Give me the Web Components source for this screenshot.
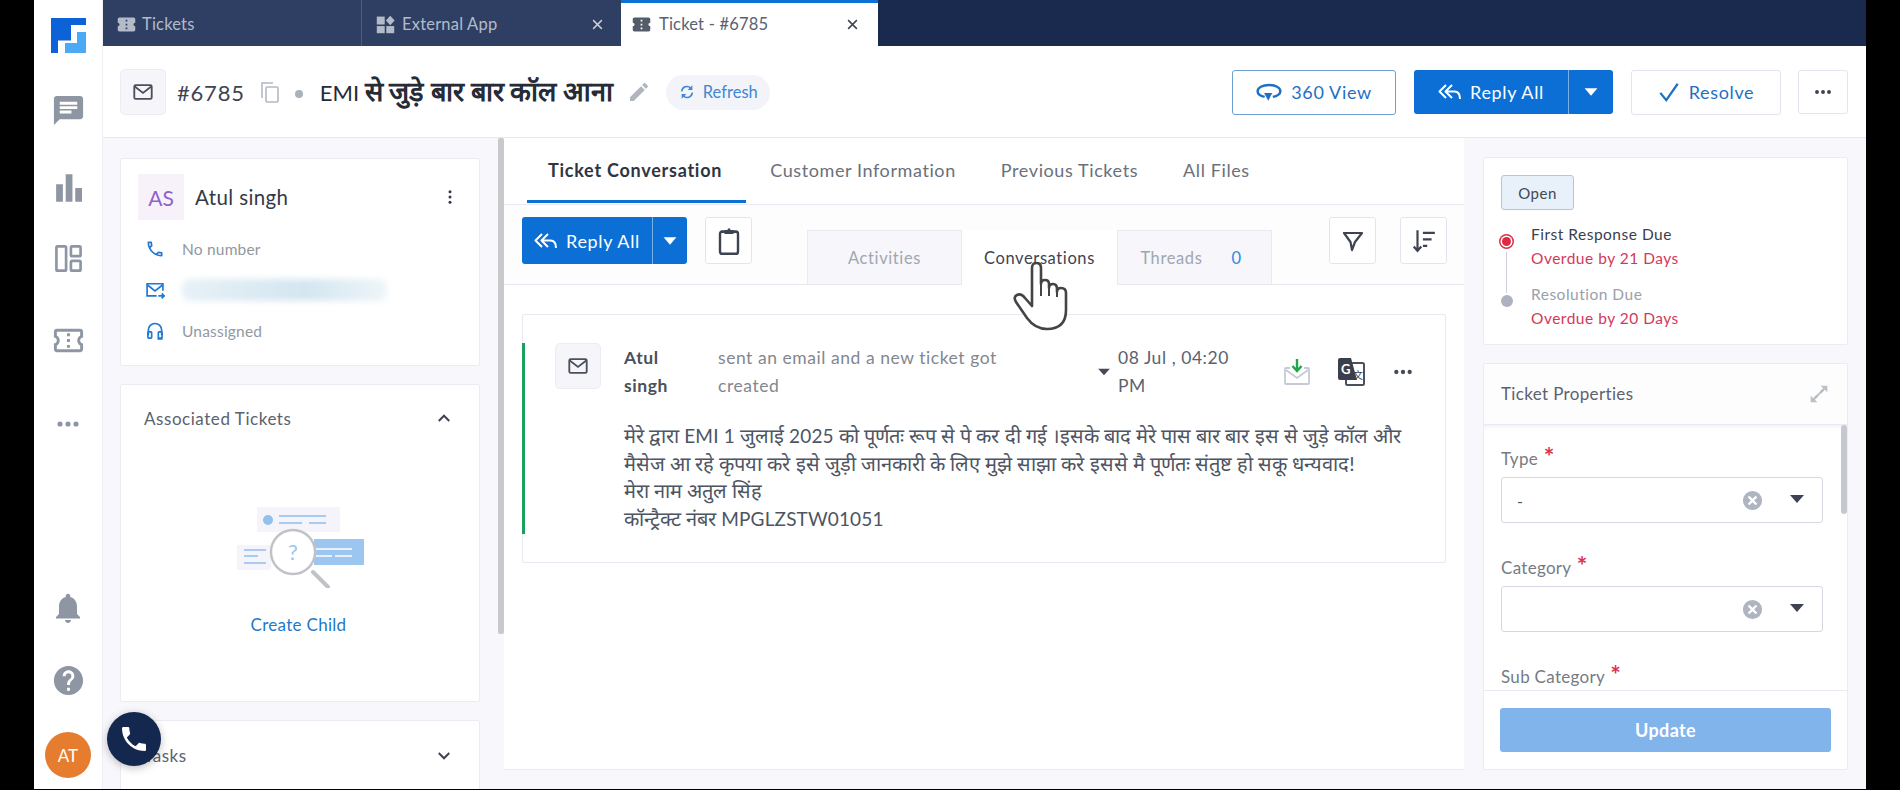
<!DOCTYPE html>
<html lang="hi"><head><meta charset="utf-8"><title>Ticket</title>
<style>
html,body{margin:0;padding:0;background:#000;width:1900px;height:790px;overflow:hidden}
body{font-family:Lato,"Noto Sans",sans-serif;color:#333a47}
</style></head><body>
<x-app>
  <x-sidebar slot="side"></x-sidebar>
  <x-tabbar slot="tabs"></x-tabbar>
  <x-ticket-header slot="head"></x-ticket-header>
  <x-left-col slot="left"></x-left-col>
  <x-conv-panel slot="center"></x-conv-panel>
  <x-right-col slot="right"></x-right-col>
</x-app>
<script>
const ICONS={
 ticketFill:'<path fill="currentColor" d="M22 10V6c0-1.11-.9-2-2-2H4c-1.1 0-1.99.89-1.99 2v4c1.1 0 1.99.9 1.99 2s-.89 2-2 2v4c0 1.1.9 2 2 2h16c1.1 0 2-.9 2-2v-4c-1.1 0-2-.9-2-2s.9-2 2-2zm-9 7.5h-2v-2h2v2zm0-4.5h-2v-2h2v2zm0-4.5h-2v-2h2v2z"/>',
 ticket:'<path fill="currentColor" d="M22 10V6c0-1.11-.9-2-2-2H4c-1.1 0-1.99.89-1.99 2v4c1.1 0 1.99.9 1.99 2s-.89 2-2 2v4c0 1.1.9 2 2 2h16c1.1 0 2-.9 2-2v-4c-1.1 0-2-.9-2-2s.9-2 2-2zm-2-1.46c-1.19.69-2 1.99-2 3.46s.81 2.77 2 3.46V18H4v-2.54c1.19-.69 2-1.99 2-3.46 0-1.48-.8-2.77-1.99-3.46L4 6h16v2.54zM11 15h2v2h-2zm0-4h2v2h-2zm0-4h2v2h-2z"/>',
 apps:'<g fill="currentColor"><rect x="1" y="2" width="10" height="10"/><rect x="1" y="14" width="10" height="9"/><rect x="13" y="14" width="10" height="9"/><path d="M18 1l5.500 6-5.500 6-5.500-6z"/></g>',
 chat:'<path fill="currentColor" d="M20 2H4c-1.1 0-2 .9-2 2v18l4-4h14c1.1 0 2-.9 2-2V4c0-1.1-.9-2-2-2zM6 9h12v2H6V9zm8 5H6v-2h8v2zm4-6H6V6h12v2z"/>',
 chart:'<g fill="currentColor"><rect x="1" y="9" width="6" height="14"/><rect x="9.500" y="1" width="6" height="22"/><rect x="18" y="12" width="6" height="11"/></g>',
 layout:'<g fill="none" stroke="currentColor" stroke-width="2.200"><rect x="2" y="2" width="8" height="20" rx="1"/><rect x="14" y="2" width="8" height="8" rx="1"/><rect x="14" y="14" width="8" height="8" rx="1"/></g>',
 dots:'<g fill="currentColor"><circle cx="4" cy="12" r="2.600"/><circle cx="12" cy="12" r="2.600"/><circle cx="20" cy="12" r="2.600"/></g>',
 vdots:'<g fill="currentColor"><circle cx="12" cy="5" r="2"/><circle cx="12" cy="12" r="2"/><circle cx="12" cy="19" r="2"/></g>',
 bell:'<path fill="currentColor" d="M12 22c1.1 0 2-.9 2-2h-4c0 1.1.9 2 2 2zm6-6v-5c0-3.07-1.63-5.64-4.5-6.32V4c0-.83-.67-1.5-1.5-1.5s-1.5.67-1.5 1.5v.68C7.64 5.36 6 7.92 6 11v5l-2 2v1h16v-1l-2-2z"/>',
 help:'<path fill="currentColor" d="M12 2C6.48 2 2 6.48 2 12s4.48 10 10 10 10-4.48 10-10S17.52 2 12 2zm1 17h-2v-2h2v2zm2.07-7.75l-.9.92C13.45 12.9 13 13.5 13 15h-2v-.5c0-1.1.45-2.1 1.17-2.83l1.24-1.26c.37-.36.59-.86.59-1.41 0-1.1-.9-2-2-2s-2 .9-2 2H8c0-2.21 1.79-4 4-4s4 1.79 4 4c0 .88-.36 1.68-.93 2.25z"/>',
 phone:'<path fill="currentColor" d="M6.62 10.79c1.44 2.83 3.76 5.14 6.59 6.59l2.2-2.2c.27-.27.67-.36 1.02-.24 1.12.37 2.33.57 3.57.57.55 0 1 .45 1 1V20c0 .55-.45 1-1 1-9.39 0-17-7.61-17-17 0-.55.45-1 1-1h3.5c.55 0 1 .45 1 1 0 1.25.2 2.45.57 3.57.11.35.03.74-.25 1.02l-2.2 2.2z"/>',
 phoneLine:'<path fill="currentColor" d="M6.54 5c.06.89.21 1.76.45 2.59l-1.2 1.2c-.41-1.2-.67-2.47-.76-3.79h1.51m9.86 12.02c.85.24 1.72.39 2.6.45v1.49c-1.32-.09-2.59-.35-3.8-.75l1.2-1.19M7.5 3H4c-.55 0-1 .45-1 1 0 9.39 7.61 17 17 17 .55 0 1-.45 1-1v-3.49c0-.55-.45-1-1-1-1.24 0-2.45-.2-3.57-.57-.1-.04-.21-.05-.31-.05-.26 0-.51.1-.71.29l-2.2 2.2c-2.83-1.45-5.15-3.76-6.59-6.59l2.2-2.2c.28-.28.36-.67.25-1.02C8.7 6.45 8.5 5.25 8.5 4c0-.55-.45-1-1-1z"/>',
 mail:'<g fill="none" stroke="currentColor" stroke-width="2"><rect x="2.500" y="4.500" width="19" height="15" rx="1.500"/><path d="M3 6l9 7 9-7"/></g>',
 mailSend:'<g fill="none" stroke="currentColor" stroke-width="2"><path d="M14 19H2.500V4.500h19V13"/><path d="M3 6l9 7 9-7"/><path d="M16 19h7M20 16l3 3-3 3"/></g>',
 headset:'<g fill="none" stroke="currentColor" stroke-width="2"><path d="M4 17V11a8 8 0 0116 0v6"/><rect x="3.500" y="13" width="4.500" height="7.500" rx="1"/><rect x="16" y="13" width="4.500" height="7.500" rx="1"/><path d="M20 20v1.500h-5"/></g>',
 copy:'<g fill="none" stroke="currentColor" stroke-width="1.600"><path d="M4 18V3h11"/><rect x="8" y="7" width="12" height="15" rx="1"/></g>',
 pen:'<path fill="currentColor" d="M3 17.25V21h3.75L17.81 9.94l-3.75-3.75L3 17.25zM20.71 7.04a1 1 0 000-1.41l-2.34-2.34a1 1 0 00-1.41 0l-1.83 1.83 3.75 3.75 1.83-1.83z"/>',
 refresh:'<g fill="none" stroke="currentColor" stroke-width="2.400"><path d="M4 11a8 8 0 0113.500-5"/><path d="M20 13a8 8 0 01-13.500 5"/></g><path fill="currentColor" d="M20 2v7h-7zM4 22v-7h7z"/>',
 view360:'<g fill="none" stroke="currentColor" stroke-width="2.300"><path d="M8 16.500C4 15.700 1.500 13.800 1.500 11.300 1.500 8 6 5.500 12 5.500s10.500 2.500 10.500 5.800c0 2.500-3 4.600-7 5.200"/></g><path fill="currentColor" d="M7.500 13h7.500l-3.700 7z"/>',
 replyAll:'<g fill="none" stroke="currentColor" stroke-width="2" stroke-linejoin="round"><path d="M8 5l-6.500 6.500L8 18"/><path d="M14 5l-6.500 6.500L14 18"/><path d="M8 11.500h8.500c3.500 0 5.500 2.500 5.500 7.500"/></g>',
 caret:'<path fill="currentColor" d="M5 8h14l-7 8z"/>',
 check:'<path fill="none" stroke="currentColor" stroke-width="2.400" d="M2.500 13l6.500 8L21.500 3"/>',
 up:'<path fill="none" stroke="currentColor" stroke-width="2.600" d="M5 16l7-7 7 7"/>',
 down:'<path fill="none" stroke="currentColor" stroke-width="2.600" d="M5 8l7 7 7-7"/>',
 clipboard:'<rect x="3" y="4" width="18" height="19" rx="2" fill="none" stroke="currentColor" stroke-width="2.400" stroke-linejoin="round"/><path fill="currentColor" d="M7.500 2.500h3a1.500 1.500 0 013 0h3v3.500h-9z"/>',
 filter:'<path fill="none" stroke="currentColor" stroke-width="2.200" stroke-linejoin="round" d="M3 4h18l-7 9-3 8-1.500-8z"/>',
 sort:'<g fill="none" stroke="currentColor" stroke-width="2"><path d="M6 2v18M2.500 17L6 21l3.500-4"/><path d="M11 4.500h11M11 10.500h8M11 16.500h4"/></g>',
 expand:'<path fill="currentColor" d="M14 2h8v8l-3-3-4 4-2-2 4-4zM10 22H2v-8l3 3 4-4 2 2-4 4z" opacity=".9"/><path stroke="currentColor" stroke-width="2" d="M17 7L7 17"/>',
 clear:'<path fill="currentColor" fill-rule="evenodd" d="M12 2a10 10 0 100 20 10 10 0 000-20zM8.700 7l3.300 3.300L15.300 7 17 8.700 13.700 12l3.300 3.300-1.700 1.700-3.300-3.300L8.700 17 7 15.300l3.300-3.300L7 8.700z"/>',
 close:'<path fill="none" stroke="currentColor" stroke-width="2.400" d="M5 5l14 14M19 5L5 19"/>'
};
function def(name,css,html,extra){
  const tpl=document.createElement('template');
  tpl.innerHTML='<style>'+css+'</style>'+html;
  customElements.define(name,class extends HTMLElement{
    constructor(){super();this.attachShadow({mode:'open'}).appendChild(tpl.content.cloneNode(true));if(extra)extra.call(this)}
  });
}
customElements.define('x-icon',class extends HTMLElement{
  constructor(){super();this.attachShadow({mode:'open'})}
  connectedCallback(){
    const s=this.getAttribute('size')||24, w=this.getAttribute('w')||s, h=this.getAttribute('h')||s;
    this.shadowRoot.innerHTML='<style>:host{display:inline-flex;flex:none;color:'+(this.getAttribute('color')||'inherit')+'}svg{display:block}</style><svg width="'+w+'" height="'+h+'" viewBox="0 0 24 24" preserveAspectRatio="none">'+ICONS[this.getAttribute('name')]+'</svg>';
  }
});
def('x-app',`
:host{display:grid;grid-template-columns:69px 1fr;grid-template-rows:46px 92px 1fr;margin-left:34px;width:1832px;height:789px;background:#f7f7fc;position:relative;overflow:hidden}
::slotted([slot=side]){grid-row:1/4}
.body{display:grid;grid-template-columns:401px 960px 1fr;min-height:0}
`,`<slot name="side"></slot><slot name="tabs"></slot><slot name="head"></slot>
<div class="body"><slot name="left"></slot><slot name="center"></slot><slot name="right"></slot></div>`);

def('x-sidebar',`
:host{display:flex;flex-direction:column;align-items:center;background:#fff;border-right:1px solid #eeeef5;color:#8e96a3;height:789px;box-sizing:border-box;position:relative}
.logo{margin-top:18px}
.i{height:30px;display:flex;align-items:center;justify-content:center}
.bottom{margin-top:auto;display:flex;flex-direction:column;align-items:center;padding-bottom:11px}
.av{width:46px;height:46px;border-radius:50%;background:#e57c2e;color:#fff;display:flex;align-items:center;justify-content:center;font:17px Lato,sans-serif;margin-top:34px}
`,`
<svg class="logo" width="35" height="35" viewBox="0 0 35 35"><path fill="#0c62d6" d="M0 0h35v7H20v15.500H7V35H0z"/><path fill="#4aaaf5" d="M26 14h9v21H14V25h12z"/></svg>
<div class="i" style="margin-top:42px"><x-icon name="chat" size="35"></x-icon></div>
<div class="i" style="margin-top:48px"><x-icon name="chart" w="27" h="30"></x-icon></div>
<div class="i" style="margin-top:40px"><x-icon name="layout" size="29"></x-icon></div>
<div class="i" style="margin-top:52px"><x-icon name="ticket" size="35"></x-icon></div>
<div class="i" style="margin-top:54px"><x-icon name="dots" size="24"></x-icon></div>
<div class="bottom">
<x-icon name="bell" size="36"></x-icon>
<x-icon name="help" size="35" style="margin-top:37px"></x-icon>
<div class="av">AT</div>
</div>`);

def('x-tab-item',`
:host{display:flex;align-items:center;width:259px;box-sizing:border-box;height:46px;font:16.500px Lato,sans-serif;letter-spacing:.2px;color:#b4bbc8;padding:2px 14px 0;border-right:1px solid #4d5a78;position:relative}
:host([active]){background:#fff;color:#5a6170;border-right:0;border-top:3px solid #0b6fd6;width:257px;padding:0 10px 1px 10px}
.t{margin-left:7px;flex:1}
`,`<slot name="icon"></slot><span class="t"><slot></slot></span><slot name="x"></slot>`);
def('x-tabbar',`
:host{display:flex;background:#1a2a4f;height:46px}
.old{display:flex;background:#2e3f63}
x-tab-item:first-child{padding-left:13px}
`,`<div class="old">
<x-tab-item><x-icon slot="icon" name="ticketFill" size="21" style="margin-right:-2px"></x-icon>Tickets</x-tab-item>
<x-tab-item style="border-right:0"><x-icon slot="icon" name="apps" size="19"></x-icon>External App<x-icon slot="x" name="close" size="15" color="#c6ccd6" style="margin-right:2px"></x-icon></x-tab-item>
</div>
<x-tab-item active><x-icon slot="icon" name="ticketFill" size="21" color="#555c69"></x-icon>Ticket - #6785<x-icon slot="x" name="close" size="15" color="#3d4350" style="margin-right:8px"></x-icon></x-tab-item>`);

def('x-btn',`
:host{display:inline-flex;align-items:center;justify-content:center;box-sizing:border-box;height:45px;border:1px solid #e3e5ee;border-radius:3px;background:#fff;font:18px Lato,sans-serif;letter-spacing:.65px;color:#1f6fc4;gap:9px}
:host([outline]){border-color:#6f9fd0;border-width:1.5px}
`,`<slot></slot>`);
def('x-split',`
:host{display:inline-flex;height:var(--h,44px);background:#0b6fd6;border-radius:3px;color:#fff;font:18px Lato,sans-serif;letter-spacing:.65px}
.a{display:flex;align-items:center;justify-content:center;gap:8px;width:var(--a,154px);border-right:1px solid #7ab0e8;box-sizing:content-box}
.b{display:flex;align-items:center;justify-content:center;flex:1;min-width:var(--b,44px)}
`,`<div class="a"><x-icon name="replyAll" size="24"></x-icon><slot></slot></div><div class="b"><x-icon name="caret" size="22"></x-icon></div>`);
def('x-tile',`
:host{display:flex;align-items:center;justify-content:center;width:46px;height:46px;box-sizing:border-box;background:#f5f5fa;border:1px solid #ecedf4;border-radius:5px;color:#4a505c;flex:none}
`,`<x-icon name="mail" size="22"></x-icon>`);
def('x-ticket-header',`
:host{display:flex;align-items:center;background:#fff;border-bottom:1px solid #e6e7ee;box-sizing:border-box;height:92px;padding:1px 18px 0 17px;font-family:Lato,sans-serif}
.id{font-size:22px;letter-spacing:.8px;color:#3d4451;margin-left:11px}
.dot{width:8px;height:8px;border-radius:50%;background:#aab0bc;margin:4px 17px 0 13px}
.title{font-size:22px;color:#252b37;white-space:nowrap;width:296px;line-height:30px}
.title span{font-size:27.100px;font-weight:700;line-height:30px}
.ref{display:flex;align-items:center;gap:8px;height:35px;width:104px;box-sizing:border-box;border-radius:18px;background:#f3f3fa;color:#3f87d2;font-size:16.500px;padding-left:13px;margin-left:15px}
.sp{flex:1}
x-split{margin:0 18px}
`,`<x-tile></x-tile><span class="id">#6785</span>
<x-icon name="copy" size="24" color="#b3b8c2" style="margin-left:13px"></x-icon>
<i class="dot"></i><div class="title">EMI <span>से जुड़े बार बार कॉल आना</span></div>
<x-icon name="pen" size="24" color="#b0b5be" style="margin-left:11px"></x-icon>
<div class="ref"><x-icon name="refresh" size="16"></x-icon>Refresh</div><span class="sp"></span>
<x-btn outline style="width:164px"><x-icon name="view360" size="26"></x-icon>360 View</x-btn>
<x-split style="--a:154px;--b:44px;--h:44px">Reply All</x-split>
<x-btn style="width:150px;color:#1f6fc4"><x-icon name="check" size="22"></x-icon>Resolve</x-btn>
<x-btn style="width:50px;margin-left:17px;color:#3d4350;height:44px"><x-icon name="dots" size="18"></x-icon></x-btn>`);

def('x-card',`
:host{display:block;background:#fff;border:1px solid #ebecf3;border-radius:2px;box-sizing:border-box;flex:none}
`,`<slot></slot>`);
def('x-left-col',`
:host{display:flex;flex-direction:column;gap:18px;padding:20px 24px 0 17px;background:#f7f7fc;position:relative;overflow:hidden;min-height:0;box-sizing:border-box;height:651px;font-family:Lato,sans-serif}
.sb{position:absolute;right:0;top:0;width:6px;height:496px;background:#c9c9cb;border-radius:2px}
.contact{height:208px;padding:15px 20px 15px 17px}
.who{display:flex;align-items:center}
.av{width:46px;height:46px;background:#f7f2f9;color:#8e62d0;display:flex;align-items:center;justify-content:center;font-size:21px}
.nm{font-size:20.500px;letter-spacing:.4px;color:#333a47;margin-left:11px;flex:1}
.row{display:flex;align-items:center;height:41px;color:#9298a2;font-size:15.500px;letter-spacing:.2px}
.row x-icon{margin:0 17px 0 7px;color:#1f78d1}
.who+.row{margin-top:8px}
.blur{width:205px;height:22px;background:linear-gradient(90deg,#e7f1f7,#d4e6f0 60%,#eef5f9);border-radius:8px;filter:blur(3px)}
.assoc{height:318px;display:flex;flex-direction:column;align-items:center;padding:0 23px}
.ch{display:flex;align-items:center;justify-content:space-between;align-self:stretch;height:66px;font-size:17px;letter-spacing:.55px;color:#5b626f}
.ch x-icon{color:#3d4350;margin-right:3px}
.ill{margin-top:56px}
.cc{margin-top:26px;color:#1f78c8;font-size:17px;letter-spacing:.3px;margin-left:-3px}
.tasks{height:100px;padding:0 23px}
.tasks .ch{height:69px}
`,`
<x-card class="contact">
 <div class="who"><div class="av">AS</div><div class="nm">Atul singh</div><x-icon name="vdots" size="18" color="#333a47"></x-icon></div>
 <div class="row"><x-icon name="phoneLine" size="20"></x-icon>No number</div>
 <div class="row"><x-icon name="mailSend" size="20"></x-icon><div class="blur"></div></div>
 <div class="row"><x-icon name="headset" size="20"></x-icon>Unassigned</div>
</x-card>
<x-card class="assoc">
 <div class="ch">Associated Tickets<x-icon name="up" size="18"></x-icon></div>
 <svg class="ill" width="127" height="81" viewBox="0 0 127 81">
  <rect x="20" width="83" height="25" fill="#f5f4fa"/><circle cx="31" cy="13" r="5" fill="#92c1ee"/>
  <g stroke="#8fbfee" stroke-width="1.500"><path d="M42 9h47M42 16h23M72 16h17"/></g>
  <rect y="38" width="34" height="25" fill="#f5f4fa"/>
  <g stroke="#8fbfee" stroke-width="1.500"><path d="M7 43h22M7 49h14M7 56h22"/></g>
  <rect x="77" y="32" width="50" height="26" fill="#9cc6f0"/>
  <g stroke="#fff" stroke-width="1.500"><path d="M79 42h36M79 49h16M98 49h17"/></g>
  <circle cx="56" cy="45" r="22" fill="#fff" stroke="#c0c2c8" stroke-width="2.400"/>
  <text x="56" y="53" text-anchor="middle" font-size="22" font-family="Lato,sans-serif" fill="#9cc6f0">?</text>
  <path d="M76 65l15 15" stroke="#c0c2c8" stroke-width="4" stroke-linecap="round"/>
 </svg>
 <div class="cc">Create Child</div>
</x-card>
<x-card class="tasks"><div class="ch">Tasks<x-icon name="down" size="18"></x-icon></div></x-card>
<div class="sb"></div>`);

def('x-main-tab',`
:host{display:flex;align-items:center;padding:2px 21px 0;height:60px;font:18px Lato,sans-serif;letter-spacing:.6px;color:#6a707c;border-bottom:3px solid transparent;box-sizing:content-box}
:host([active]){font-weight:700;color:#2f3542;border-bottom-color:#0b6fd6;letter-spacing:.75px;padding:2px 24px 0 21px}
`,`<slot></slot>`);
def('x-sub-tab',`
:host{display:flex;align-items:center;justify-content:center;width:155px;height:55px;box-sizing:border-box;background:#f6f6fb;border:1px solid #e8e9f1;color:#a0a6b0;font:16.500px Lato,sans-serif;letter-spacing:.6px;gap:29px}
:host([active]){background:#fff;color:#3d4451;border-bottom-color:#fff;border-top:0;border-left:0;border-right:0;height:56px;position:relative}
`,`<slot></slot>`);
def('x-square',`
:host{display:flex;align-items:center;justify-content:center;width:47px;height:47px;box-sizing:border-box;background:#fff;border:1px solid #e3e5ee;border-radius:3px;color:#3d4350;flex:none}
`,`<slot></slot>`);
def('x-conv-panel',`
:host{display:block;margin-bottom:19px;background:#fff;border:solid #ebecf3;border-width:0 0 1px 0;position:relative;height:632px;box-sizing:border-box;font-family:Lato,sans-serif}
.tabs{display:flex;height:67px;box-sizing:border-box;padding-left:23px;gap:3px;border-bottom:1px solid #e8e9f1}
.bar{display:flex;align-items:flex-start;height:80px;box-sizing:border-box;padding:12px 17px 0 18px;background:#fdfdfe;border-bottom:1px solid #e8e9f1}
x-split{--a:130px;--b:34px;--h:47px}
.subs{display:flex;margin:13px 0 0 55px}
.sp{flex:1}
.card{margin:29px 18px 0;height:249px;box-sizing:border-box;background:#fff;border:1px solid #e8e9f1;border-radius:2px;padding-top:28px}
.inner{border-left:3px solid #19a05a;height:191px;margin-left:-1px;padding-left:30px;box-sizing:border-box;display:flex;align-items:flex-start;color:#5b626f}
.col{margin-left:23px;flex:1;font-size:17.500px;line-height:28px;letter-spacing:.55px;min-width:0;padding-top:1px}
.top{display:flex;align-items:flex-start}
.nm{font-weight:700;width:94px;padding-right:30px;box-sizing:border-box;color:#4a505c}
.ds{width:380px;padding-right:70px;box-sizing:border-box;color:#82878f;flex:none}
.dt{width:135px;color:#5b626f;margin-left:7px;flex:none}
.acts{display:flex;align-items:center;margin-left:30px;margin-top:14px}
.msg{margin-top:22px;font-size:20px;line-height:27.500px;white-space:nowrap;color:#4d5462;letter-spacing:0}
.msg span{font-size:19px;letter-spacing:.15px}
`,`
<div class="tabs"><x-main-tab active>Ticket Conversation</x-main-tab><x-main-tab>Customer Information</x-main-tab><x-main-tab>Previous Tickets</x-main-tab><x-main-tab>All Files</x-main-tab></div>
<div class="bar">
 <x-split>Reply All</x-split>
 <x-square style="margin-left:18px"><x-icon name="clipboard" w="24" h="28"></x-icon></x-square>
 <div class="subs"><x-sub-tab>Activities</x-sub-tab><x-sub-tab active>Conversations</x-sub-tab><x-sub-tab style="padding-right:7px">Threads<span style="color:#2d8ae0">0</span></x-sub-tab></div>
 <span class="sp"></span>
 <x-square><x-icon name="filter" size="24"></x-icon></x-square>
 <x-square style="margin-left:24px"><x-icon name="sort" size="26"></x-icon></x-square>
</div>
<div class="card"><div class="inner">
 <x-tile></x-tile>
 <div class="col">
  <div class="top">
   <div class="nm">Atul singh</div>
   <div class="ds">sent an email and a new ticket got created</div>
   <x-icon name="caret" size="20" color="#444a56" style="margin-top:18px;margin-left:-4px;margin-right:-3px"></x-icon>
   <div class="dt">08 Jul , 04:20 PM</div>
   <div class="acts">
    <svg width="28" height="28" viewBox="0 0 28 28"><path fill="none" stroke="#c5cad6" stroke-width="1.800" d="M7 10H3a1 1 0 00-1 1v14a1 1 0 001 1h22a1 1 0 001-1V11a1 1 0 00-1-1h-4"/><path fill="none" stroke="#c5cad6" stroke-width="1.800" d="M3 12l11 8 11-8"/><path fill="none" stroke="#1fa64a" stroke-width="2.400" d="M14 1v11M9.500 8l4.500 5 4.500-5"/></svg>
    <svg width="28" height="28" viewBox="0 0 28 28" style="margin-left:26px"><rect x="9" y="5" width="18" height="22" rx="1.500" fill="#fff" stroke="#4a505c" stroke-width="2"/><path fill="#3a3f4b" d="M1 2a2 2 0 012-2h11l6 22H3a2 2 0 01-2-2z"/><text x="4" y="16" font-size="13" font-weight="700" font-family="Lato,sans-serif" fill="#fff">G</text><text x="16" y="21" font-size="10" font-family="'Noto Sans CJK SC',sans-serif" fill="#3a3f4b">文</text></svg>
    <x-icon name="dots" size="20" color="#444a56" style="margin-left:28px"></x-icon>
   </div>
  </div>
  <div class="msg">मेरे द्वारा <span>EMI 1</span> जुलाई <span>2025</span> को पूर्णतः रूप से पे कर दी गई ।इसके बाद मेरे पास बार बार इस से जुड़े कॉल और<br>मैसेज आ रहे कृपया करे इसे जुड़ी जानकारी के लिए मुझे साझा करे इससे मै पूर्णतः संतुष्ट हो सकू धन्यवाद!<br>मेरा नाम अतुल सिंह<br>कॉन्ट्रैक्ट नंबर <span>MPGLZSTW01051</span></div>
 </div>
</div></div>
<svg style="position:absolute;left:509px;top:124px" width="56" height="69" viewBox="0 0 56 69"><path fill="#fff" stroke="#444" stroke-width="2.600" stroke-linejoin="round" d="M19 35V6q0-5 4.500-5T28 6v16q0-4 4-4t4 4v4q0-4 4-4t4 5v3q0-4 4-4 5 0 5 5v17q0 19-19 19-12 0-20-11L3 40q-3-5 1-7t8 3l7 8z"/><path fill="none" stroke="#444" stroke-width="2" d="M28 22v12M36 26v8M44 30v5"/></svg>`);

def('x-field',`
:host{display:block;font-family:Lato,sans-serif;flex:none}
.l{height:20px;line-height:20px;font-size:17px;letter-spacing:.3px;color:#757b86}
.l i{color:#d9344f;font-style:normal;margin-left:1px;font-size:25px;line-height:20px;position:relative;top:1px;font-weight:700}
.s{display:flex;align-items:center;box-sizing:border-box;height:46px;margin-top:12px;border:1px solid #d5d8e2;border-radius:3px;background:#fff;padding-left:15px;font-size:16px;color:#4d5462}
.v{flex:1}
`,`<div class="l"><slot name="label"></slot> <i>*</i></div><div class="s"><span class="v"><slot></slot></span><x-icon name="clear" size="23" color="#aeb4c0"></x-icon><x-icon name="caret" size="24" color="#3d4350" style="margin:-2px 13px 0 21px"></x-icon></div>`);
def('x-right-col',`
:host{display:flex;flex-direction:column;gap:18px;padding:19px 18px 19px 19px;background:#f7f7fc;box-sizing:border-box;height:651px;font-family:Lato,sans-serif}
.sla{height:188px;padding:17px 17px 0;font-size:15.500px;letter-spacing:.5px}
.open{display:inline-flex;align-items:center;justify-content:center;width:73px;height:35px;box-sizing:border-box;background:#e8f0f9;border:1px solid #a9c9e8;border-radius:3px;color:#424956;font-size:15px}
.tl{margin-top:12px;display:grid;grid-template-columns:30px 1fr;grid-template-rows:repeat(2,60px)}
.m{position:relative}
.n{line-height:24px;color:#3a404c}
.o{line-height:24px;color:#d4375a}
.mute{color:#9aa0aa}
.r{width:9px;height:9px;border-radius:50%;background:#dc2c45;position:absolute;left:1px;top:15px;box-shadow:0 0 0 1.500px #fff,0 0 0 3px #dc2c45}
.g{width:12px;height:12px;border-radius:50%;background:#aeb2bf;position:absolute;left:0;top:13px}
.ln{position:absolute;left:5px;top:30px;height:41px;width:1px;background:#cdd0d8}
.props{height:407px;display:flex;flex-direction:column}
.ph{display:flex;align-items:center;justify-content:space-between;height:61px;box-sizing:border-box;padding:0 18px 1px 17px;border-bottom:1px solid #e8e9f1;font-size:17px;letter-spacing:.35px;color:#5b626f;background:#fdfdfe}
.pb{flex:1;min-height:0;overflow:hidden;position:relative;padding:20px 24px 0 17px;display:flex;flex-direction:column;gap:31px;box-shadow:inset 0 6px 6px -6px #e4e5ee}
.sb{position:absolute;right:0;top:0;width:6px;height:89px;background:#c6c8cf;border-radius:3px}
.pf{height:79px;box-sizing:border-box;border-top:1px solid #e8e9f1;padding:17px 16px 0 16px}
.up{height:44px;background:#80b4eb;border-radius:3px;color:#fff;font-size:18px;font-weight:700;letter-spacing:.4px;display:flex;align-items:center;justify-content:center}
`,`
<x-card class="sla">
 <div class="open">Open</div>
 <div class="tl">
  <div class="m"><span class="r"></span><span class="ln"></span></div><div><div class="n">First Response Due</div><div class="o">Overdue by 21 Days</div></div>
  <div class="m"><span class="g"></span></div><div><div class="n mute">Resolution Due</div><div class="o">Overdue by 20 Days</div></div>
 </div>
</x-card>
<x-card class="props">
 <div class="ph">Ticket Properties<x-icon name="expand" size="20" color="#b5b9c2"></x-icon></div>
 <div class="pb"><x-field><span slot="label">Type</span>-</x-field><x-field><span slot="label">Category</span></x-field><x-field><span slot="label">Sub Category</span></x-field><div class="sb"></div></div>
 <div class="pf"><div class="up">Update</div></div>
</x-card>`);

def('x-call-fab',`
:host{position:absolute;left:73px;top:712px;width:54px;height:54px;border-radius:50%;background:#13274f;display:flex;align-items:center;justify-content:center;color:#fff;box-shadow:0 2px 8px rgba(0,0,0,.25);z-index:5}
`,`<x-icon name="phone" size="32"></x-icon>`);
document.querySelector('x-app').shadowRoot.appendChild(document.createElement('x-call-fab'));
</script>
</body></html>
